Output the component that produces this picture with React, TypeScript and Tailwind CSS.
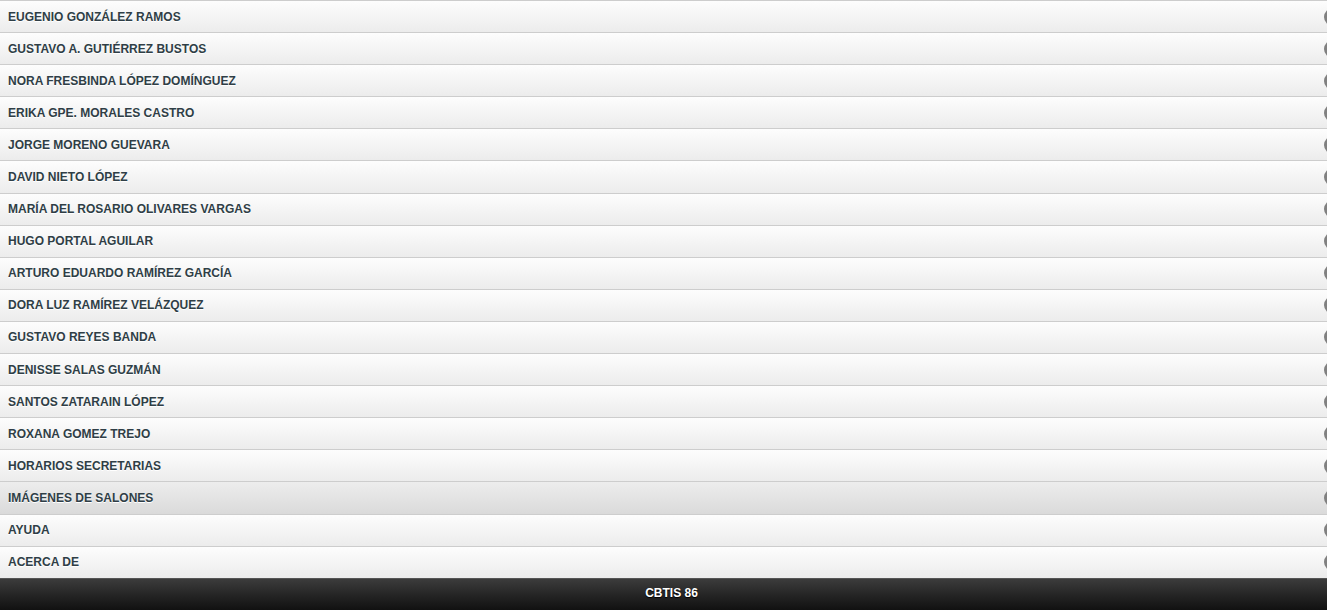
import React from "react";

const items = [
  "EUGENIO GONZÁLEZ RAMOS",
  "GUSTAVO A. GUTIÉRREZ BUSTOS",
  "NORA FRESBINDA LÓPEZ DOMÍNGUEZ",
  "ERIKA GPE. MORALES CASTRO",
  "JORGE MORENO GUEVARA",
  "DAVID NIETO LÓPEZ",
  "MARÍA DEL ROSARIO OLIVARES VARGAS",
  "HUGO PORTAL AGUILAR",
  "ARTURO EDUARDO RAMÍREZ GARCÍA",
  "DORA LUZ RAMÍREZ VELÁZQUEZ",
  "GUSTAVO REYES BANDA",
  "DENISSE SALAS GUZMÁN",
  "SANTOS ZATARAIN LÓPEZ",
  "ROXANA GOMEZ TREJO",
  "HORARIOS SECRETARIAS",
  "IMÁGENES DE SALONES",
  "AYUDA",
  "ACERCA DE",
];

const App = () => {
  return (
    <div className="flex flex-col h-[610px] overflow-hidden font-['Liberation_Sans',Arial,sans-serif] font-bold text-[12px]">
      <ul className="flex-1">
        {items.map((name) => (
          <li
            key={name}
            className={`relative flex items-center h-[32.1px] box-border border-t border-[#cdcdcd] pl-2 pt-[0px] text-[#2f3e46] overflow-hidden ${
              name === "IMÁGENES DE SALONES"
                ? "bg-gradient-to-b from-[#ededed] to-[#dadada]"
                : "bg-gradient-to-b from-[#fdfdfd] to-[#ececec]"
            }`}
          >
            <span className="[text-shadow:0_1px_0_#fff]">{name}</span>
            <span className="absolute right-[-15px] top-1/2 -translate-y-1/2 w-[18px] h-[18px] rounded-full bg-[#808080]" />
          </li>
        ))}
      </ul>
      <div className="flex items-center justify-center h-[32px] pl-4 pb-[3px] border-t border-[#555] bg-gradient-to-b from-[#3c3c3c] to-[#111] text-white [text-shadow:0_1px_1px_#000]">
        CBTIS 86
      </div>
    </div>
  );
};

export default App;
